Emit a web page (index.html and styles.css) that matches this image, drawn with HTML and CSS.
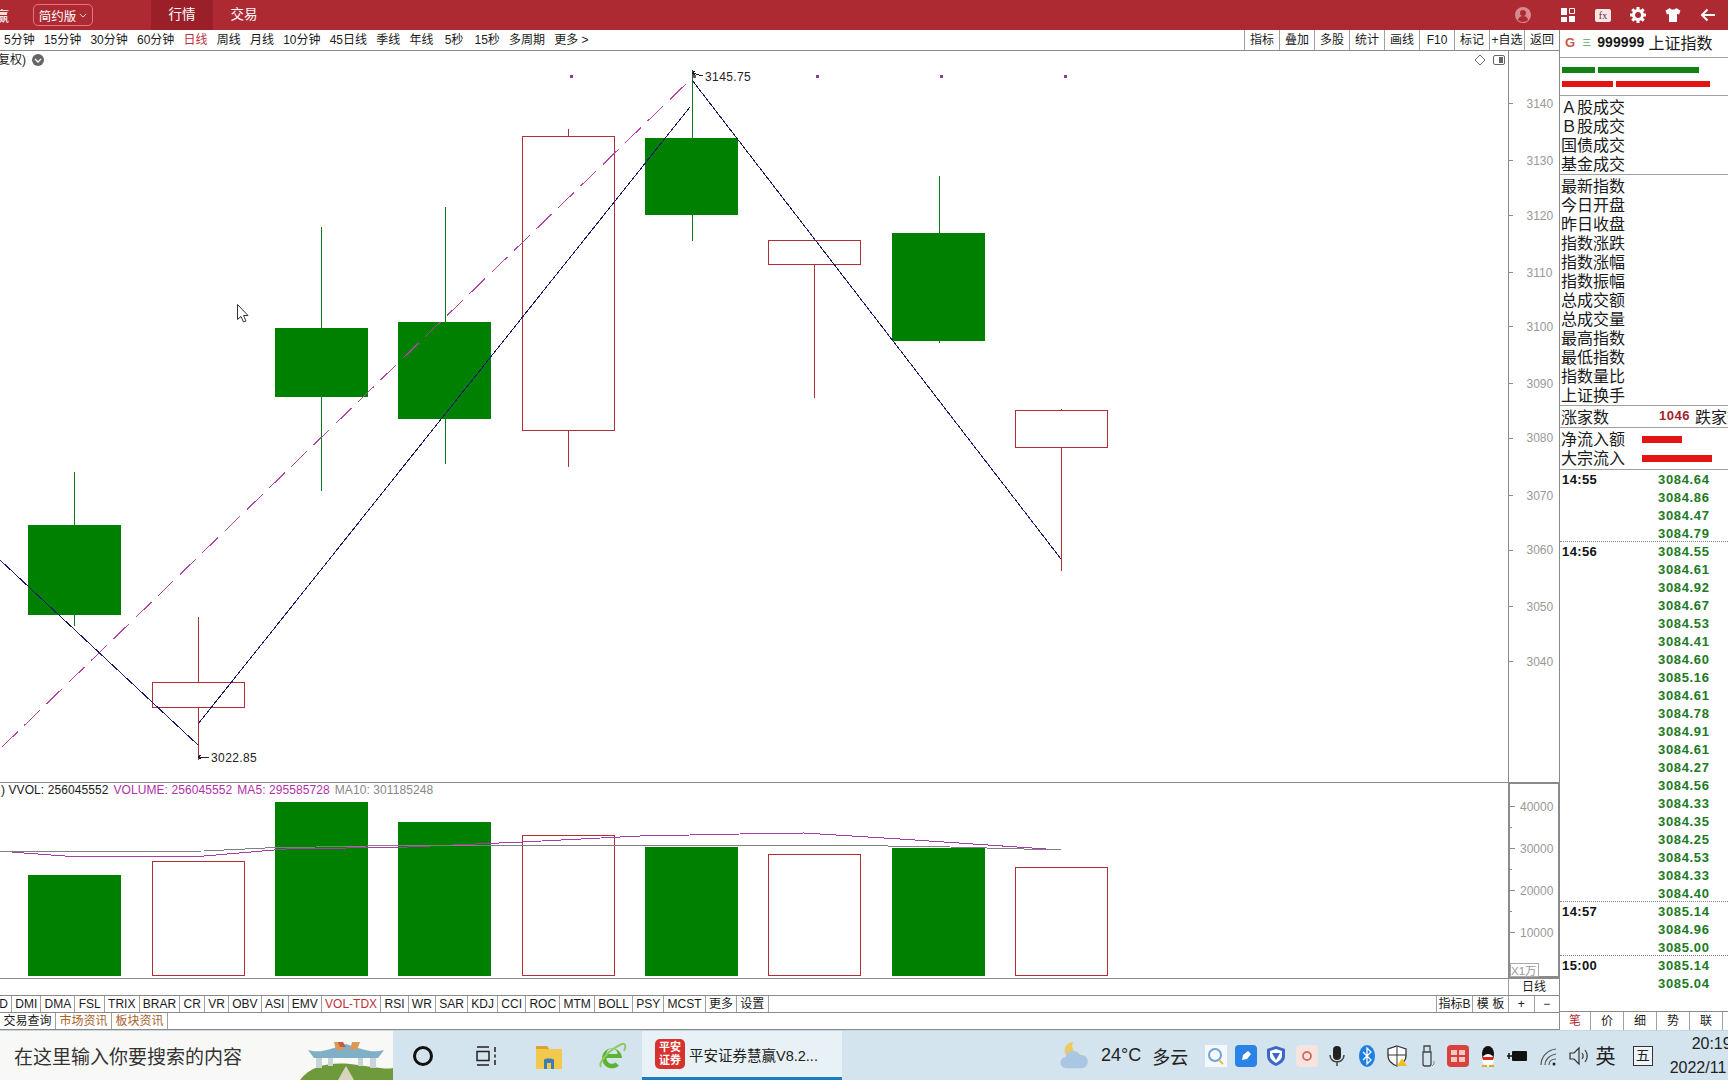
FILE: index.html
```html
<!DOCTYPE html>
<html lang="zh-CN">
<head>
    <meta charset="UTF-8">
    <title>平安证券慧赢</title>
    <link rel="stylesheet" href="styles.css">
</head>
<body>
    <!-- Title bar -->
    <header class="titlebar">
        <span class="brand">赢</span>
        <span class="edition">简约版
            <svg class="chev" viewBox="0 0 10 6"><path d="M1 1l4 4 4-4"/></svg>
        </span>
        <nav class="main-tabs">
            <a class="main-tab active">行情</a>
            <a class="main-tab">交易</a>
        </nav>
        <div class="win-icons">
            <svg class="win-icon user" viewBox="0 0 16 16"><circle cx="8" cy="8" r="8" fill="#d98a8e"/><circle cx="8" cy="6" r="3" fill="#ae2a33"/><path d="M2.8 13c1-3 3-4 5.200-4s4.200 1 5.200 4a8 8 0 0 1-10.400 0z" fill="#ae2a33"/></svg>
            <svg class="win-icon" viewBox="0 0 16 16"><path d="M1 1h6v7H1zM1 10h6v5H1zM9 9h6v6H9z" fill="#fff"/><path d="M9.500 1.500h5v5h-5z" fill="none" stroke="#fff"/></svg>
            <span class="fx">fx</span>
            <svg class="win-icon" viewBox="0 0 16 16"><circle cx="8" cy="8" r="4.500" fill="none" stroke="#fff" stroke-width="3"/><path d="M8 0v3M8 13v3M0 8h3M13 8h3M2.300 2.300l2.100 2.100M11.600 11.600l2.100 2.100M13.700 2.300l-2.100 2.100M4.400 11.600l-2.100 2.100" stroke="#fff" stroke-width="3"/></svg>
            <svg class="win-icon" viewBox="0 0 16 16"><path d="M5 1L0.500 3.500 2 7.500l2-.7V15h8V6.800l2 .7 1.500-4L11 1c-.5 2-5.500 2-6 0z" fill="#fff"/></svg>
            <svg class="win-icon" viewBox="0 0 16 16"><path d="M15 8H2M7.500 2.500L2 8l5.500 5.500" fill="none" stroke="#fff" stroke-width="2"/></svg>
        </div>
    </header>

    <div class="app">
        <div class="workspace">
            <!-- Period toolbar -->
            <div class="toolbar">
                <div class="periods">
                    <a>5分钟</a><a>15分钟</a><a>30分钟</a><a>60分钟</a><a class="on">日线</a><a>周线</a><a>月线</a><a>10分钟</a><a>45日线</a><a>季线</a><a>年线</a><a class="wide">5秒</a><a class="wide">15秒</a><a>多周期</a><a>更多 &gt;</a>
                </div>
                <div class="tools">
                    <a>指标</a><a>叠加</a><a>多股</a><a>统计</a><a>画线</a><a>F10</a><a>标记</a><a>+自选</a><a>返回</a>
                </div>
            </div>

            <!-- Price pane, drawn in page coordinates -->
            <section class="pane price-pane">
                <svg class="plot" viewBox="0 51 1559 731">
                    <line class="axis" x1="1508.500" y1="51" x2="1508.500" y2="782"/>
                    <g class="ticks">
                        <path d="M1508 103.500h5M1508 160.500h5M1508 215.500h5M1508 272.500h5M1508 326.500h5M1508 383.500h5M1508 438.500h5M1508 495.500h5M1508 550.500h5M1508 606.500h5M1508 661.500h5"/>
                    </g>
                    <g class="axis-labels">
                        <text x="1526.500" y="108">3140</text><text x="1526.500" y="165">3130</text><text x="1526.500" y="220">3120</text><text x="1526.500" y="277">3110</text><text x="1526.500" y="331">3100</text><text x="1526.500" y="388">3090</text><text x="1526.500" y="442">3080</text><text x="1526.500" y="500">3070</text><text x="1526.500" y="554">3060</text><text x="1526.500" y="611">3050</text><text x="1526.500" y="666">3040</text>
                    </g>

                    <path class="wick-d" d="M74.500 472V626M321.500 227V491M445 207V464M692 70V241M939 176V343"/>
                    <path class="wick-u" d="M198.500 617V760M568.500 129V467M814.500 265V398M1061.500 409V571"/>
                    <rect class="down" x="28" y="525" width="93" height="90"/>
                    <rect class="down" x="275" y="328" width="93" height="69"/>
                    <rect class="down" x="398" y="322" width="93" height="97"/>
                    <rect class="down" x="645" y="138" width="93" height="77"/>
                    <rect class="down" x="892" y="233" width="93" height="108"/>
                    <rect class="up" x="152.500" y="682.500" width="92" height="25"/>
                    <rect class="up" x="522.500" y="136.500" width="92" height="294"/>
                    <rect class="up" x="768.500" y="240.500" width="92" height="24"/>
                    <rect class="up" x="1015.500" y="410.500" width="92" height="37"/>

                    <line class="ma-dash" x1="2" y1="747" x2="691" y2="79"/>
                    <path class="zig" d="M0 560L198 745M198 724L690 107M692 80L1061 559"/>

                    <g class="dots">
                        <rect x="570" y="75" width="3" height="3"/><rect x="693" y="75" width="3" height="3"/><rect x="816" y="75" width="3" height="3"/><rect x="940" y="75" width="3" height="3"/><rect x="1064" y="75" width="3" height="3"/>
                    </g>
                    <path class="leader" d="M703 76l-11-3M692 73l3-2M692 73l3 2"/>
                    <text class="peak" x="705" y="81">3145.75</text>
                    <path class="leader" d="M209 757h-11M198 757l3-2M198 757l3 2"/>
                    <text class="peak" x="211" y="762">3022.85</text>

                    <path class="cursor" d="M237.500 304.500v15l3.500-3 2.500 5.500 2.500-1-2.500-5.500h4.500z"/>
                    <path class="glyph" d="M1480 55l5 5-5 5-5-5z"/>
                    <rect class="glyph" x="1493.500" y="55.500" width="11" height="9" rx="1.500"/>
                    <rect x="1499" y="57" width="4" height="6" fill="#666"/>
                </svg>
                <div class="adjust">复权)
                    <svg class="adjust-dot" viewBox="0 0 12 12"><circle cx="6" cy="6" r="6" fill="#666"/><path d="M3 5l3 3 3-3" fill="none" stroke="#fff" stroke-width="1.300"/></svg>
                </div>
            </section>

            <!-- Volume pane -->
            <section class="pane vol-pane">
                <svg class="plot" viewBox="0 783 1559 195">
                    <rect x="28" y="875" width="93" height="101" class="down"/>
                    <rect x="275" y="802" width="93" height="174" class="down"/>
                    <rect x="398" y="822" width="93" height="154" class="down"/>
                    <rect x="645" y="847" width="93" height="129" class="down"/>
                    <rect x="892" y="848" width="93" height="128" class="down"/>
                    <rect x="152.500" y="861.500" width="92" height="114" class="up"/>
                    <rect x="522.500" y="835.500" width="92" height="140" class="up"/>
                    <rect x="768.500" y="854.500" width="92" height="121" class="up"/>
                    <rect x="1015.500" y="867.500" width="92" height="108" class="up"/>
                    <path class="ma5" d="M0 851L24 853L65 856L204 856L286 849L408 847L522 842L640 836L740 834L804 833L900 839L1061 850"/>
                    <path class="ma10" d="M0 852L204 851L265 848L367 846L640 845L826 845L950 847L1061 850"/>
                    <rect class="vol-frame" x="1509" y="783" width="50" height="194"/>
                    <path class="ticks-line" d="M1510 806.500h5M1510 827.500h2M1510 848.500h5M1510 869.500h2M1510 890.500h5M1510 911.500h2M1510 932.500h5"/>
                    <g class="axis-labels">
                        <text x="1520" y="811">40000</text><text x="1520" y="853">30000</text><text x="1520" y="895">20000</text><text x="1520" y="937">10000</text>
                    </g>
                    <rect class="unit-box" x="1510.500" y="963.500" width="28" height="13"/>
                    <text class="unit" x="1511" y="975">X1万</text>
                </svg>
                <div class="vol-legend">
                    <span>) VVOL: 256045552</span>
                    <span class="mag">VOLUME: 256045552</span>
                    <span class="mag">MA5: 295585728</span>
                    <span class="gry">MA10: 301185248</span>
                </div>
            </section>

            <div class="period-row"><span class="period-cell">日线</span></div>

            <div class="index-tabs">
                <div class="tab-list">
                    <a>D</a><a>DMI</a><a>DMA</a><a>FSL</a><a>TRIX</a><a>BRAR</a><a>CR</a><a>VR</a><a>OBV</a><a>ASI</a><a>EMV</a><a class="on">VOL-TDX</a><a>RSI</a><a>WR</a><a>SAR</a><a>KDJ</a><a>CCI</a><a>ROC</a><a>MTM</a><a>BOLL</a><a>PSY</a><a>MCST</a><a>更多</a><a>设置</a>
                </div>
                <div class="tab-right">
                    <a class="t-b">指标B</a><a class="t-b">模 板</a><a class="t-z">+</a><a class="t-z">−</a>
                </div>
            </div>

            <div class="info-tabs">
                <a>交易查询</a><a class="brown">市场资讯</a><a class="brown">板块资讯</a>
            </div>
        </div>

        <!-- Quote side panel -->
        <aside class="side">
            <div class="quote-head">
                <span class="g">G</span>
                <span class="eq">三</span>
                <b class="code">999999</b>
                <span class="name">上证指数</span>
            </div>
            <div class="bars">
                <div class="bar-row"><i class="seg green" style="width:33px"></i><i class="seg green" style="width:101px"></i></div>
                <div class="bar-row"><i class="seg red" style="width:51px"></i><i class="seg red" style="width:94px"></i></div>
            </div>
            <ul class="labels market">
                <li>Ａ股成交</li><li>Ｂ股成交</li><li>国债成交</li><li>基金成交</li>
            </ul>
            <ul class="labels index">
                <li>最新指数</li><li>今日开盘</li><li>昨日收盘</li><li>指数涨跌</li><li>指数涨幅</li><li>指数振幅</li><li>总成交额</li><li>总成交量</li><li>最高指数</li><li>最低指数</li><li>指数量比</li><li>上证换手</li>
            </ul>
            <div class="updown"><span class="ud-label">涨家数</span><b class="ud-num">1046</b><span class="ud-next">跌家数</span></div>
            <div class="flow">
                <div class="flow-row"><span>净流入额</span><i class="seg red" style="width:40px"></i></div>
                <div class="flow-row"><span>大宗流入</span><i class="seg red" style="width:70px"></i></div>
            </div>
            <div class="tick-list">
                <div class="tick-group">
                    <div class="tick"><b>14:55</b><span>3084.64</span></div>
                    <div class="tick"><b></b><span>3084.86</span></div>
                    <div class="tick"><b></b><span>3084.47</span></div>
                    <div class="tick"><b></b><span>3084.79</span></div>
                </div>
                <div class="tick-group">
                    <div class="tick"><b>14:56</b><span>3084.55</span></div>
                    <div class="tick"><b></b><span>3084.61</span></div>
                    <div class="tick"><b></b><span>3084.92</span></div>
                    <div class="tick"><b></b><span>3084.67</span></div>
                    <div class="tick"><b></b><span>3084.53</span></div>
                    <div class="tick"><b></b><span>3084.41</span></div>
                    <div class="tick"><b></b><span>3084.60</span></div>
                    <div class="tick"><b></b><span>3085.16</span></div>
                    <div class="tick"><b></b><span>3084.61</span></div>
                    <div class="tick"><b></b><span>3084.78</span></div>
                    <div class="tick"><b></b><span>3084.91</span></div>
                    <div class="tick"><b></b><span>3084.61</span></div>
                    <div class="tick"><b></b><span>3084.27</span></div>
                    <div class="tick"><b></b><span>3084.56</span></div>
                    <div class="tick"><b></b><span>3084.33</span></div>
                    <div class="tick"><b></b><span>3084.35</span></div>
                    <div class="tick"><b></b><span>3084.25</span></div>
                    <div class="tick"><b></b><span>3084.53</span></div>
                    <div class="tick"><b></b><span>3084.33</span></div>
                    <div class="tick"><b></b><span>3084.40</span></div>
                </div>
                <div class="tick-group">
                    <div class="tick"><b>14:57</b><span>3085.14</span></div>
                    <div class="tick"><b></b><span>3084.96</span></div>
                    <div class="tick"><b></b><span>3085.00</span></div>
                </div>
                <div class="tick-group">
                    <div class="tick"><b>15:00</b><span>3085.14</span></div>
                    <div class="tick"><b></b><span>3085.04</span></div>
                </div>
            </div>
            <div class="side-tabs">
                <a class="on">笔</a><a>价</a><a>细</a><a>势</a><a>联</a>
            </div>
        </aside>
    </div>

    <!-- Windows taskbar -->
    <footer class="taskbar">
        <div class="search">
            <span class="search-text">在这里输入你要搜索的内容</span>
            <svg class="scene" viewBox="0 0 93 40">
                <path d="M0 40C10 26 30 22 50 24s35 6 43 4v12z" fill="#6f9a3c"/>
                <path d="M46 26L38 40h16z" fill="#d8d4c0"/>
                <path d="M8 10c14 4 24-2 38-6 14 4 24 10 38 6l-6 8H14z" fill="#7fb0c8"/>
                <path d="M34 2h7l3 8h-8zM52 2h8l-3 8h-7z" fill="#d89a58"/>
                <path d="M38 2h5l3 5h-6z" fill="#c85a48"/>
                <path d="M16 18h6v10h-6zM28 18h5v8h-5zM58 18h5v8h-5zM70 18h6v10h-6z" fill="#c8d4d8"/>
            </svg>
        </div>
        <div class="task-icons">
            <svg class="task-icon" viewBox="0 0 24 24"><circle cx="12" cy="12" r="8.500" fill="none" stroke="#111" stroke-width="3"/></svg>
            <svg class="task-icon" viewBox="0 0 24 24"><path d="M3 3h12M3 21h12M3 7.500h12v9H3zM21 3v5M21 10.500v3M21 16v5" fill="none" stroke="#222" stroke-width="1.500"/></svg>
            <svg class="task-icon folder" viewBox="0 0 28 28"><path d="M1 4h11l2 3h13v20H1z" fill="#f2c94c"/><path d="M1 4h11l2 3H1z" fill="#d9a52e"/><path d="M9 27v-9c0-2 10-2 10 0v9h-3v-6h-4v6z" fill="#3d7fb5"/></svg>
            <svg class="task-icon ie" viewBox="0 0 30 30"><path d="M25 16.500a10 10 0 1 0-3 8l-3.500-3a5.500 5.500 0 0 1-9-4.500H25zM9.500 13a5.500 5.500 0 0 1 11 0z" fill="#5cb531"/><path d="M4 26C1 22 11 9 25 3c4-1 4 3 2 7" fill="none" stroke="#8fc96a" stroke-width="2"/></svg>
        </div>
        <div class="app-tile">
            <span class="app-logo">平安<br>证券</span>
            <span class="app-name">平安证券慧赢V8.2...</span>
        </div>
        <div class="weather">
            <svg class="weather-icon" viewBox="0 0 32 32"><path d="M14 1a9 9 0 0 0 8 13A9 9 0 1 1 14 1z" fill="#f0c860"/><path d="M7 29a6 6 0 0 1-1-12 8 8 0 0 1 15-2 7 7 0 0 1 3 14z" fill="#a9c6e2"/></svg>
            <span class="temp">24°C</span>
            <span class="sky">多云</span>
        </div>
        <div class="tray">
            <svg class="tray-icon" viewBox="0 0 22 22"><rect width="22" height="22" fill="#f4f8fa"/><circle cx="10" cy="10" r="6" fill="none" stroke="#6aa6d8" stroke-width="2"/><path d="M14 15l4 4" stroke="#e4c040" stroke-width="2"/></svg>
            <svg class="tray-icon" viewBox="0 0 22 22"><rect width="22" height="22" rx="4" fill="#2a84e8"/><path d="M7 15l1-5 5-4 3 3-4 5z" fill="#fff"/></svg>
            <svg class="tray-icon" viewBox="0 0 22 22"><path d="M11 1l9 3v7c0 5-4 8-9 10-5-2-9-5-9-10V4z" fill="#3a68c8"/><path d="M11 4l6 2v5c0 3-3 5-6 7-3-2-6-4-6-7V6z" fill="#fff"/><path d="M7 8h8l-4 7z" fill="#3a68c8"/></svg>
            <svg class="tray-icon" viewBox="0 0 22 22"><rect width="22" height="22" rx="4" fill="#f6e4e0"/><circle cx="11" cy="11" r="4" fill="none" stroke="#d86a5a" stroke-width="1.800"/></svg>
            <svg class="tray-icon" viewBox="0 0 22 22"><rect x="7" y="1" width="8" height="14" rx="4" fill="#222"/><path d="M4 10c0 9 14 9 14 0M11 17v4" fill="none" stroke="#444" stroke-width="1.500"/></svg>
            <svg class="tray-icon" viewBox="0 0 22 22"><ellipse cx="11" cy="11" rx="8" ry="11" fill="#1f7fe0"/><path d="M7 7l8 8-4 4V3l4 4-8 8" fill="none" stroke="#fff" stroke-width="1.300"/></svg>
            <svg class="tray-icon" viewBox="0 0 22 22"><path d="M11 1l9 3v7c0 5-4 8-9 10-5-2-9-5-9-10V4z" fill="#fff" stroke="#333" stroke-width="1.300"/><path d="M11 2v18M2 10h18" stroke="#333"/><path d="M16 13l5 8H11z" fill="#f0c020"/></svg>
            <svg class="tray-icon" viewBox="0 0 22 22"><path d="M7 7h8v12a2 2 0 0 1-2 2H9a2 2 0 0 1-2-2zM8 1h6v6H8z" fill="none" stroke="#444" stroke-width="1.300"/><path d="M18 16v3l-2 2" fill="none" stroke="#888"/></svg>
            <svg class="tray-icon" viewBox="0 0 22 22"><rect width="22" height="22" rx="4" fill="#d8413e"/><path d="M4 5h6v5H4zM12 5h6v5h-6zM4 12h6v5H4zM12 12h6v5h-6z" fill="#f4c8c0"/></svg>
            <svg class="tray-icon" viewBox="0 0 22 22"><ellipse cx="11" cy="9" rx="6" ry="8" fill="#111"/><ellipse cx="11" cy="15" rx="6" ry="6" fill="#fff"/><path d="M5 12h12l-1 3H6z" fill="#d8281c"/><path d="M5 21h5M12 21h5" stroke="#e8a820" stroke-width="2"/></svg>
            <svg class="tray-icon" viewBox="0 0 22 22"><rect x="5" y="6" width="15" height="10" rx="1" fill="#111"/><path d="M0 11h5M2 8v6" stroke="#111" stroke-width="1.500"/></svg>
            <svg class="tray-icon" viewBox="0 0 22 22"><path d="M4 20C4 12 10 5 19 4M8 20c0-5 4-10 11-11M12 20c0-3 2-6 7-6" fill="none" stroke="#555" stroke-width="1.200"/><circle cx="17" cy="19" r="1.500" fill="#222"/></svg>
            <svg class="tray-icon" viewBox="0 0 22 22"><path d="M3 8h4l5-5v16l-5-5H3z" fill="none" stroke="#333" stroke-width="1.200"/><path d="M15 8c1.500 2 1.500 4 0 6M18 5c3 4 3 8 0 12" fill="none" stroke="#333" stroke-width="1.200"/></svg>
            <span class="ime">英</span>
            <span class="ime-box">五</span>
        </div>
        <div class="clock">
            <span class="clock-time">20:19</span>
            <span>2022/11</span>
        </div>
    </footer>
</body>
</html>
```

FILE: styles.css
```css
/* General */
* {
    box-sizing: border-box;
}

html, body {
    height: 100%;
}

body {
    margin: 0;
    width: 1728px;
    height: 1080px;
    overflow: hidden;
    background: #fff;
    color: #1a1a1a;
    font-family: "Liberation Sans", "Noto Sans CJK SC", sans-serif;
    font-size: 12px;
    display: flex;
    flex-direction: column;
}

ul {
    list-style: none;
    margin: 0;
    padding: 0;
}

/* Title bar */
.titlebar {
    height: 30px;
    flex: none;
    background: #ae2a33;
    color: #fff;
    display: flex;
    align-items: center;
}

.brand {
    width: 9px;
    overflow: hidden;
    font-size: 14px;
    direction: rtl;
    flex: none;
}

.edition {
    margin-left: 24px;
    width: 60px;
    height: 22px;
    border: 1px solid #e4767c;
    border-radius: 5px;
    font-size: 12.500px;
    display: flex;
    align-items: center;
    justify-content: center;
    gap: 3px;
    flex: none;
}

.chev {
    width: 8px;
    height: 5px;
    fill: none;
    stroke: #fff;
}

.main-tabs {
    display: flex;
    margin-left: 58px;
    height: 30px;
}

.main-tab {
    width: 62px;
    font-size: 13.500px;
    line-height: 30px;
    text-align: center;
}

.main-tab.active {
    background: #9a1f28;
}

.win-icons {
    margin-left: auto;
    margin-right: 12px;
    display: flex;
    align-items: center;
    gap: 19px;
}

.win-icon {
    width: 16px;
    height: 16px;
}

.win-icon.user {
    margin-right: 10px;
}

.fx {
    width: 16px;
    height: 13px;
    background: #f6e8e8;
    border-radius: 2px;
    color: #7a2228;
    font-family: "Liberation Serif", serif;
    font-size: 10px;
    line-height: 13px;
    text-align: center;
}

/* Main grid */
.app {
    flex: none;
    height: 1000px;
    display: grid;
    grid-template-columns: 1559px 169px;
}

.workspace {
    display: flex;
    flex-direction: column;
    min-width: 0;
}

/* Period toolbar */
.toolbar {
    height: 21px;
    flex: none;
    display: flex;
    justify-content: space-between;
    border-bottom: 1px solid #8a8a8a;
    line-height: 20px;
}

.periods {
    display: flex;
    gap: 9.200px;
    padding-left: 4px;
}

.periods a {
    white-space: nowrap;
}

.periods .on {
    color: #c0303a;
}

.periods .wide {
    margin-left: 2px;
}

.tools {
    display: flex;
}

.tools a {
    width: 35px;
    text-align: center;
    border-left: 1px solid #a0a0a0;
    white-space: nowrap;
}

/* Chart panes */
.pane {
    position: relative;
    overflow: hidden;
    flex: none;
}

.price-pane {
    height: 731px;
}

.vol-pane {
    height: 196px;
    border-top: 1px solid #8a8a8a;
}

.plot {
    display: block;
    width: 100%;
    height: 100%;
}

.plot path, .plot line, .plot rect {
    shape-rendering: crispEdges;
}

.plot text {
    font-family: "Liberation Sans", sans-serif;
    font-size: 12px;
}

.axis {
    stroke: #8a8a8a;
}

.ticks path, .ticks-line {
    stroke: #8a8a8a;
    fill: none;
}

.axis-labels text {
    fill: #999;
}

.down {
    fill: #008000;
}

.up {
    fill: #fff;
    stroke: #b03038;
}

.wick-d {
    stroke: #0a7a20;
    fill: none;
}

.wick-u {
    stroke: #b03038;
    fill: none;
}

.zig {
    stroke: #1c1c66;
    fill: none;
}

.ma-dash {
    stroke: #b244a8;
    stroke-dasharray: 22 9;
}

.dots rect {
    fill: #8a3f90;
}

.leader {
    stroke: #222;
    fill: none;
}

.plot .peak {
    fill: #222;
    letter-spacing: 0.400px;
}

.plot .cursor {
    fill: #fff;
    stroke: #333;
    shape-rendering: auto;
}

.plot .glyph {
    fill: #fff;
    stroke: #666;
    shape-rendering: auto;
}

.ma5 {
    fill: none;
    stroke: #a83ca8;
}

.ma10 {
    fill: none;
    stroke: #808080;
}

.vol-frame {
    fill: #fff;
    stroke: #8a8a8a;
    stroke-width: 2;
}

.unit-box {
    fill: #fff;
    stroke: #aaa;
}

.plot .unit {
    fill: #999;
    font-family: "Liberation Sans", "Noto Sans CJK SC", sans-serif;
    font-size: 11.500px;
}

.adjust {
    position: absolute;
    top: 1px;
    left: 0;
    display: flex;
    align-items: center;
    gap: 6px;
    margin-left: -2px;
    line-height: 16px;
}

.adjust-dot {
    width: 12px;
    height: 12px;
}

.vol-legend {
    position: absolute;
    top: 0;
    left: 0;
    display: flex;
    gap: 5px;
    padding-left: 1px;
    line-height: 15px;
    font-size: 12px;
    letter-spacing: 0.080px;
    white-space: nowrap;
}

.vol-legend .mag {
    color: #b030a8;
}

.vol-legend .gry {
    color: #888;
}

/* Bottom rows of the workspace */
.period-row {
    height: 17px;
    flex: none;
    display: flex;
    justify-content: flex-end;
    border-top: 1px solid #8a8a8a;
}

.period-cell {
    width: 51px;
    text-align: center;
    border-left: 1px solid #a0a0a0;
    line-height: 16px;
}

.index-tabs {
    height: 17px;
    flex: none;
    display: flex;
    justify-content: space-between;
    border-top: 1px solid #8a8a8a;
    line-height: 16px;
}

.tab-list {
    display: flex;
    margin-left: -4px;
}

.tab-list a {
    padding: 0 3.200px;
    border-right: 1px solid #a0a0a0;
    white-space: nowrap;
}

.tab-list .on {
    color: #c0303a;
}

.tab-right {
    display: flex;
}

.tab-right a {
    border-left: 1px solid #a0a0a0;
    text-align: center;
}

.t-b {
    width: 36px;
}

.t-z {
    width: 25.500px;
}

.info-tabs {
    height: 18px;
    flex: none;
    display: flex;
    border-top: 1px solid #8a8a8a;
    border-bottom: 1px solid #8a8a8a;
    line-height: 16px;
}

.info-tabs a {
    width: 56px;
    text-align: center;
    border-right: 1px solid #a0a0a0;
}

.info-tabs .brown {
    color: #a8622a;
}

/* Side panel */
.side {
    border-left: 1px solid #8a8a8a;
    display: flex;
    flex-direction: column;
    overflow: hidden;
    white-space: nowrap;
}

.quote-head {
    height: 28px;
    flex: none;
    display: flex;
    align-items: center;
    padding: 0 0 3px 5px;
    border-bottom: 1px solid #a0a0a0;
}

.g {
    color: #c8584e;
    font-size: 13px;
    font-weight: bold;
}

.eq {
    color: #55a860;
    font-size: 9px;
    margin-left: 7px;
    margin-right: 6px;
}

.code {
    font-size: 14px;
    letter-spacing: 0.100px;
}

.name {
    font-size: 16px;
    margin-left: 4px;
}

.bars {
    height: 38px;
    flex: none;
    padding: 9px 0 0 2px;
    display: flex;
    flex-direction: column;
    gap: 8px;
    border-bottom: 1px solid #a0a0a0;
}

.bar-row {
    display: flex;
    gap: 3px;
    height: 6px;
}

.seg {
    display: block;
    height: 100%;
}

.green {
    background: #128012;
}

.red {
    background: #e41414;
}

.labels {
    font-size: 16px;
    line-height: 19px;
    padding-left: 1px;
    flex: none;
}

.market {
    height: 79px;
    padding-top: 2px;
    border-bottom: 1px solid #a0a0a0;
}

.index {
    height: 231px;
    border-bottom: 1px solid #a0a0a0;
    padding-top: 2px;
}

.updown {
    height: 22px;
    flex: none;
    display: flex;
    align-items: center;
    padding: 0 0 2px 1px;
    font-size: 16px;
    border-bottom: 1px solid #a0a0a0;
}

.ud-label {
    width: 98px;
    flex: none;
}

.ud-num {
    width: 36px;
    flex: none;
    color: #a3242c;
    font-size: 13px;
    letter-spacing: 0.500px;
}

.ud-next {
    flex: none;
}

.flow {
    height: 42px;
    flex: none;
    border-bottom: 1px solid #a0a0a0;
    padding: 2px 0 0 1px;
    font-size: 16px;
}

.flow-row {
    height: 19px;
    line-height: 19px;
    display: flex;
    align-items: center;
}

.flow-row span {
    width: 81px;
}

.flow-row .seg {
    height: 7px;
}

.tick-list {
    flex: 1;
    min-height: 0;
}

.tick-group + .tick-group {
    border-top: 1px dotted #888;
    margin-top: -1px;
}

.tick {
    height: 18px;
    display: flex;
    align-items: center;
    padding-left: 2px;
    font-size: 13px;
    font-weight: bold;
}

.tick b {
    width: 96px;
    color: #111;
    letter-spacing: 0.400px;
}

.tick span {
    color: #1d7a24;
    letter-spacing: 0.650px;
}

.side-tabs {
    height: 19px;
    flex: none;
    display: flex;
    border-top: 1px solid #8a8a8a;
    line-height: 18px;
}

.side-tabs a {
    width: 33px;
    text-align: center;
    border-right: 1px solid #a0a0a0;
}

.side-tabs a:first-child {
    width: 31px;
}

.side-tabs .on {
    color: #b02a30;
}

/* Taskbar */
.taskbar {
    height: 50px;
    flex: none;
    display: flex;
    align-items: stretch;
    background: #d3e4ee;
    border-top: 1px solid #c8d8e0;
    color: #222;
}

.search {
    width: 393px;
    flex: none;
    background: #f8f8f6;
    display: flex;
    align-items: center;
    padding-left: 14px;
    overflow: hidden;
}

.search-text {
    font-size: 19px;
    color: #333;
    width: 286px;
    white-space: nowrap;
    flex: none;
}

.scene {
    width: 93px;
    height: 40px;
    align-self: flex-end;
    flex: none;
}

.task-icons {
    width: 249px;
    flex: none;
    display: grid;
    grid-template-columns: repeat(4, 63px);
    justify-items: center;
    align-items: center;
    margin-left: -2px;
    margin-right: 2px;
}

.task-icon {
    width: 24px;
    height: 26px;
}

.task-icon.folder {
    width: 28px;
    height: 28px;
}

.task-icon.ie {
    width: 30px;
    height: 32px;
}

.app-tile {
    width: 200px;
    flex: none;
    display: flex;
    align-items: center;
    gap: 4px;
    padding-left: 13px;
    background: #e8f1f6;
    border-bottom: 3px solid #1a7dc4;
}

.app-logo {
    width: 30px;
    height: 30px;
    border-radius: 5px;
    background: #d8322e;
    color: #fff;
    font-size: 11px;
    font-weight: bold;
    line-height: 13px;
    text-align: center;
    padding-top: 2px;
    flex: none;
}

.app-name {
    font-size: 14.500px;
    white-space: nowrap;
}

.weather {
    margin-left: 218px;
    width: 145px;
    flex: none;
    display: flex;
    align-items: center;
}

.weather-icon {
    width: 30px;
    height: 32px;
    flex: none;
}

.temp {
    margin-left: 11px;
    font-size: 18px;
}

.sky {
    margin-left: 11px;
    font-size: 18px;
}

.tray {
    flex: none;
    display: flex;
    align-items: center;
    gap: 8.200px;
}

.tray-icon {
    width: 22px;
    height: 22px;
    flex: none;
}

.ime {
    font-family: "Noto Sans CJK SC", sans-serif;
    font-size: 20px;
    margin-left: -2px;
}

.ime-box {
    width: 20px;
    height: 20px;
    border: 1px solid #333;
    background: #eef4f8;
    font-size: 14px;
    line-height: 17px;
    text-align: center;
    margin-left: 9px;
}

.clock {
    margin-left: 17px;
    flex: none;
    width: 70px;
    display: flex;
    flex-direction: column;
    align-items: flex-start;
    justify-content: center;
    font-size: 16px;
    line-height: 24px;
    white-space: nowrap;
}

.clock-time {
    margin-left: 22px;
}
```
